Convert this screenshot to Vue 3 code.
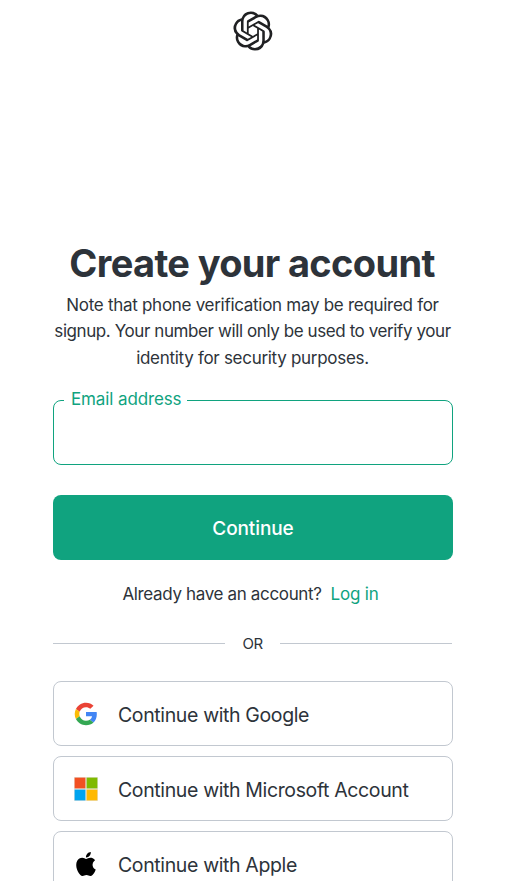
<script setup>
const providers = [
  { id: 'google', name: 'Google' },
  { id: 'microsoft', name: 'Microsoft Account' },
  { id: 'apple', name: 'Apple' },
]
</script>

<template>
  <div class="page">
    <header class="header">
      <svg class="logo" viewBox="0 0 41 41" aria-label="OpenAI">
        <path fill="currentColor" d="M37.532 16.87a9.963 9.963 0 0 0-.856-8.184 10.078 10.078 0 0 0-10.855-4.835A9.964 9.964 0 0 0 18.306.5a10.079 10.079 0 0 0-9.614 6.977 9.967 9.967 0 0 0-6.664 4.834 10.08 10.08 0 0 0 1.24 11.817 9.965 9.965 0 0 0 .856 8.185 10.079 10.079 0 0 0 10.855 4.835 9.965 9.965 0 0 0 7.516 3.35 10.078 10.078 0 0 0 9.617-6.981 9.967 9.967 0 0 0 6.663-4.834 10.079 10.079 0 0 0-1.243-11.813ZM22.498 37.886a7.474 7.474 0 0 1-4.799-1.735c.061-.033.168-.091.237-.134l7.964-4.6a1.294 1.294 0 0 0 .655-1.134V19.054l3.366 1.944a.12.12 0 0 1 .066.092v9.299a7.505 7.505 0 0 1-7.49 7.496ZM6.392 31.006a7.471 7.471 0 0 1-.894-5.023c.06.036.162.099.237.141l7.964 4.6a1.297 1.297 0 0 0 1.308 0l9.724-5.614v3.888a.12.12 0 0 1-.048.103l-8.051 4.649a7.504 7.504 0 0 1-10.24-2.744ZM4.297 13.62A7.469 7.469 0 0 1 8.2 10.333c0 .068-.004.19-.004.274v9.201a1.294 1.294 0 0 0 .654 1.132l9.723 5.614-3.366 1.944a.12.12 0 0 1-.114.01L7.04 23.856a7.504 7.504 0 0 1-2.743-10.237Zm27.658 6.437-9.724-5.615 3.367-1.943a.121.121 0 0 1 .113-.01l8.052 4.648a7.498 7.498 0 0 1-1.158 13.528v-9.476a1.293 1.293 0 0 0-.65-1.132Zm3.35-5.043c-.059-.037-.162-.099-.236-.141l-7.965-4.6a1.298 1.298 0 0 0-1.308 0l-9.723 5.614v-3.888a.12.12 0 0 1 .048-.103l8.05-4.645a7.497 7.497 0 0 1 11.135 7.763Zm-21.063 6.929-3.367-1.944a.12.12 0 0 1-.065-.092v-9.299a7.497 7.497 0 0 1 12.293-5.756 6.94 6.94 0 0 0-.236.134l-7.965 4.6a1.294 1.294 0 0 0-.654 1.132l-.006 11.225Zm1.829-3.943 4.33-2.501 4.332 2.5v5l-4.331 2.5-4.331-2.5V18Z" />
      </svg>
    </header>

    <main class="card">
      <h1 class="title">Create your account</h1>
      <p class="note">
        Note that phone verification may be required for<br />
        <span class="tight">signup. Your number will only be used to verify your</span><br />
        identity for security purposes.
      </p>

      <form class="form" @submit.prevent>
        <div class="field">
          <input id="email" class="input" type="email" />
          <label class="label" for="email">Email address</label>
        </div>
        <button class="submit" type="submit">Continue</button>
      </form>

      <p class="switch">
        <span>Already have an account?</span>
        <a class="link" href="#">Log in</a>
      </p>

      <div class="divider"><span class="or">OR</span></div>

      <div class="providers">
        <button v-for="p in providers" :key="p.id" class="provider" type="button">
          <svg v-if="p.id === 'google'" class="icon" viewBox="-1.5 -1.5 51 51">
            <path fill="#EA4335" d="M24 9.5c3.54 0 6.71 1.22 9.21 3.6l6.85-6.85C35.9 2.38 30.47 0 24 0 14.62 0 6.51 5.38 2.56 13.22l7.98 6.19C12.43 13.72 17.74 9.5 24 9.5z" />
            <path fill="#4285F4" d="M46.98 24.55c0-1.57-.15-3.09-.38-4.55H24v9.02h12.94c-.58 2.96-2.26 5.48-4.78 7.18l7.73 6c4.51-4.18 7.09-10.36 7.09-17.65z" />
            <path fill="#FBBC05" d="M10.53 28.59c-.48-1.45-.76-2.99-.76-4.59s.27-3.14.76-4.59l-7.98-6.19C.92 16.46 0 20.12 0 24c0 3.88.92 7.54 2.56 10.78l7.97-6.19z" />
            <path fill="#34A853" d="M24 48c6.48 0 11.93-2.13 15.89-5.81l-7.73-6c-2.15 1.45-4.92 2.3-8.16 2.3-6.26 0-11.57-4.22-13.47-9.91l-7.98 6.19C6.51 42.62 14.62 48 24 48z" />
          </svg>
          <svg v-else-if="p.id === 'microsoft'" class="icon" viewBox="0 0 24 24">
            <path fill="#e8e6df" d="M0 0h24v24H0z" />
            <path fill="#f25022" d="M.6.6h10.8v10.8H.6z" />
            <path fill="#7fba00" d="M12.6.6h10.8v10.8H12.6z" />
            <path fill="#00a4ef" d="M.6 12.6h10.8v10.8H.6z" />
            <path fill="#ffb900" d="M12.6 12.6h10.8v10.8H12.6z" />
          </svg>
          <svg v-else class="icon" viewBox="0 0 24 24">
            <path fill="#000" d="M12.152 6.896c-.948 0-2.415-1.078-3.96-1.04-2.04.027-3.91 1.183-4.961 3.014-2.117 3.675-.546 9.103 1.519 12.09 1.013 1.454 2.208 3.09 3.792 3.039 1.52-.065 2.09-.987 3.935-.987 1.831 0 2.35.987 3.96.948 1.637-.026 2.676-1.48 3.676-2.948 1.156-1.688 1.636-3.325 1.662-3.415-.039-.013-3.182-1.221-3.22-4.857-.026-3.04 2.48-4.494 2.597-4.559-1.429-2.09-3.623-2.324-4.39-2.376-2-.156-3.675 1.09-4.61 1.09zM15.53 3.83c.843-1.012 1.4-2.427 1.245-3.83-1.207.052-2.662.805-3.532 1.818-.78.896-1.454 2.338-1.273 3.714 1.338.104 2.715-.688 3.559-1.701" />
          </svg>
          <span>Continue with {{ p.name }}</span>
        </button>
      </div>
    </main>
  </div>
</template>

<style>
html,
body {
  overflow: hidden;
  background: #fff;
}
</style>

<style scoped>
.page {
  height: 881px;
  overflow: hidden;
  color: #2d333a;
  font-family: Inter, 'Liberation Sans', sans-serif;
}
.header {
  display: flex;
  justify-content: center;
  height: 239px;
  padding: 11px 4px 0 0;
  box-sizing: border-box;
}
.logo {
  width: 40px;
  height: 40px;
  color: #202123;
}
.card {
  width: 400px;
  margin-left: 53px;
}
.title {
  margin: 0 -9px 0 -11px;
  font-size: 38px;
  line-height: 48px;
  font-weight: 650;
  letter-spacing: -0.66px;
  text-align: center;
  white-space: nowrap;
}
.note {
  margin: 5px -9.5px 0 -10.5px;
  font-size: 17px;
  line-height: 26.25px;
  letter-spacing: -0.29px;
  text-align: center;
  white-space: nowrap;
}
.tight {
  letter-spacing: -0.41px;
}
.form {
  display: flex;
  flex-direction: column;
  gap: 30px;
  margin-top: 29px;
}
.field {
  position: relative;
  height: 65px;
}
.input {
  width: 100%;
  height: 100%;
  box-sizing: border-box;
  padding: 0 20px;
  border: 1px solid #10a37f;
  border-radius: 8px;
  outline: none;
  background: #fff;
  font: inherit;
}
.label {
  position: absolute;
  left: 11px;
  top: -12px;
  padding: 0 6px 0 7px;
  background: #fff;
  color: #10a37f;
  font-size: 17px;
  line-height: 22px;
  letter-spacing: -0.12px;
}
.submit {
  height: 65px;
  padding: 3px 0 0;
  border: 0;
  border-radius: 8px;
  background: #10a37f;
  color: #fff;
  font: 500 19px/24px Inter, sans-serif;
  letter-spacing: -0.1px;
}
.switch {
  display: flex;
  justify-content: center;
  gap: 9px;
  margin: 21px 5px 0 0;
  font-size: 17px;
  line-height: 26px;
  letter-spacing: -0.35px;
  white-space: nowrap;
}
.link {
  color: #10a37f;
  letter-spacing: -0.2px;
  text-decoration: none;
}
.divider {
  display: flex;
  align-items: center;
  height: 20px;
  margin: 27px 1px 0 0;
}
.divider::before,
.divider::after {
  content: '';
  flex: 1;
  height: 1px;
  background: #c2c8d0;
}
.or {
  width: 55px;
  font-size: 15px;
  line-height: 20px;
  letter-spacing: -0.5px;
  text-align: center;
}
.providers {
  display: flex;
  flex-direction: column;
  gap: 10px;
  margin-top: 27px;
}
.provider {
  display: flex;
  align-items: center;
  gap: 20px;
  height: 65px;
  flex: none;
  box-sizing: border-box;
  padding: 2px 20px 0;
  border: 1px solid #c2c8d0;
  border-radius: 8px;
  background: #fff;
  color: #2d333a;
  font: 400 19.5px/24px Inter, sans-serif;
  letter-spacing: -0.37px;
  white-space: nowrap;
}
.provider span {
  padding-top: 2px;
}
.icon {
  flex: none;
  width: 24px;
  height: 24px;
}
</style>
